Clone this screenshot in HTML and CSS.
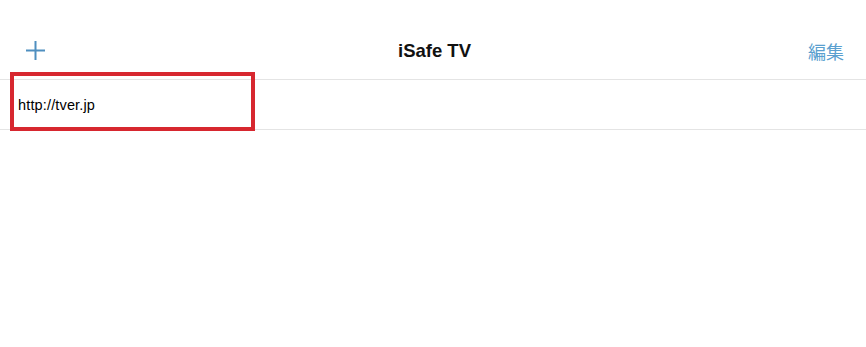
FILE: index.html
```html
<!DOCTYPE html>
<html lang="ja">
<head>
<meta charset="utf-8">
<title>iSafe TV</title>
<link rel="stylesheet" href="styles.css">
</head>
<body>
<div class="screen">
  <header class="navbar">
    <div class="nav-left">
      <svg class="plus" width="21" height="21" viewBox="0 0 21 21" aria-hidden="true">
        <path d="M10.5 1 V20 M1 10.5 H20" stroke="#4f8fc0" stroke-width="2" fill="none"/>
      </svg>
    </div>
    <h1 class="title">iSafe TV</h1>
    <div class="nav-right"><span class="edit">編集</span></div>
  </header>
  <ul class="list">
    <li class="row">http://tver.jp</li>
  </ul>
  <div class="highlight"></div>
</div>
</body>
</html>
```
FILE: styles.css
```css
html, body {
  margin: 0;
  padding: 0;
  background: #ffffff;
}
body {
  font-family: "Liberation Sans", "Noto Sans CJK JP", Arial, sans-serif;
  color: #000;
}
.screen {
  position: relative;
  width: 866px;
  height: 347px;
  overflow: hidden;
}
.navbar {
  display: flex;
  align-items: center;
  justify-content: space-between;
  height: 57px;
  padding: 22px 22px 0 25px;
  border-bottom: 1px solid #e4e4e4;
}
.nav-left, .nav-right {
  width: 80px;
  display: flex;
  align-items: center;
}
.nav-right {
  justify-content: flex-end;
}
.plus {
  display: block;
}
.title {
  margin: 0;
  font-size: 18.5px;
  font-weight: 700;
  letter-spacing: 0;
  color: #111;
}
.edit {
  font-family: "Noto Sans CJK JP", sans-serif;
  font-size: 18px;
  color: #5a9fcf;
  line-height: 1;
}
.list {
  list-style: none;
  margin: 0;
  padding: 0;
}
.row {
  height: 49px;
  display: flex;
  align-items: center;
  padding-left: 18px;
  font-size: 14.5px;
  letter-spacing: 0.15px;
  border-bottom: 1px solid #e4e4e4;
}
.highlight {
  position: absolute;
  left: 10px;
  top: 72px;
  width: 245px;
  height: 59px;
  box-sizing: border-box;
  border: 4px solid #d7272f;
}
```
